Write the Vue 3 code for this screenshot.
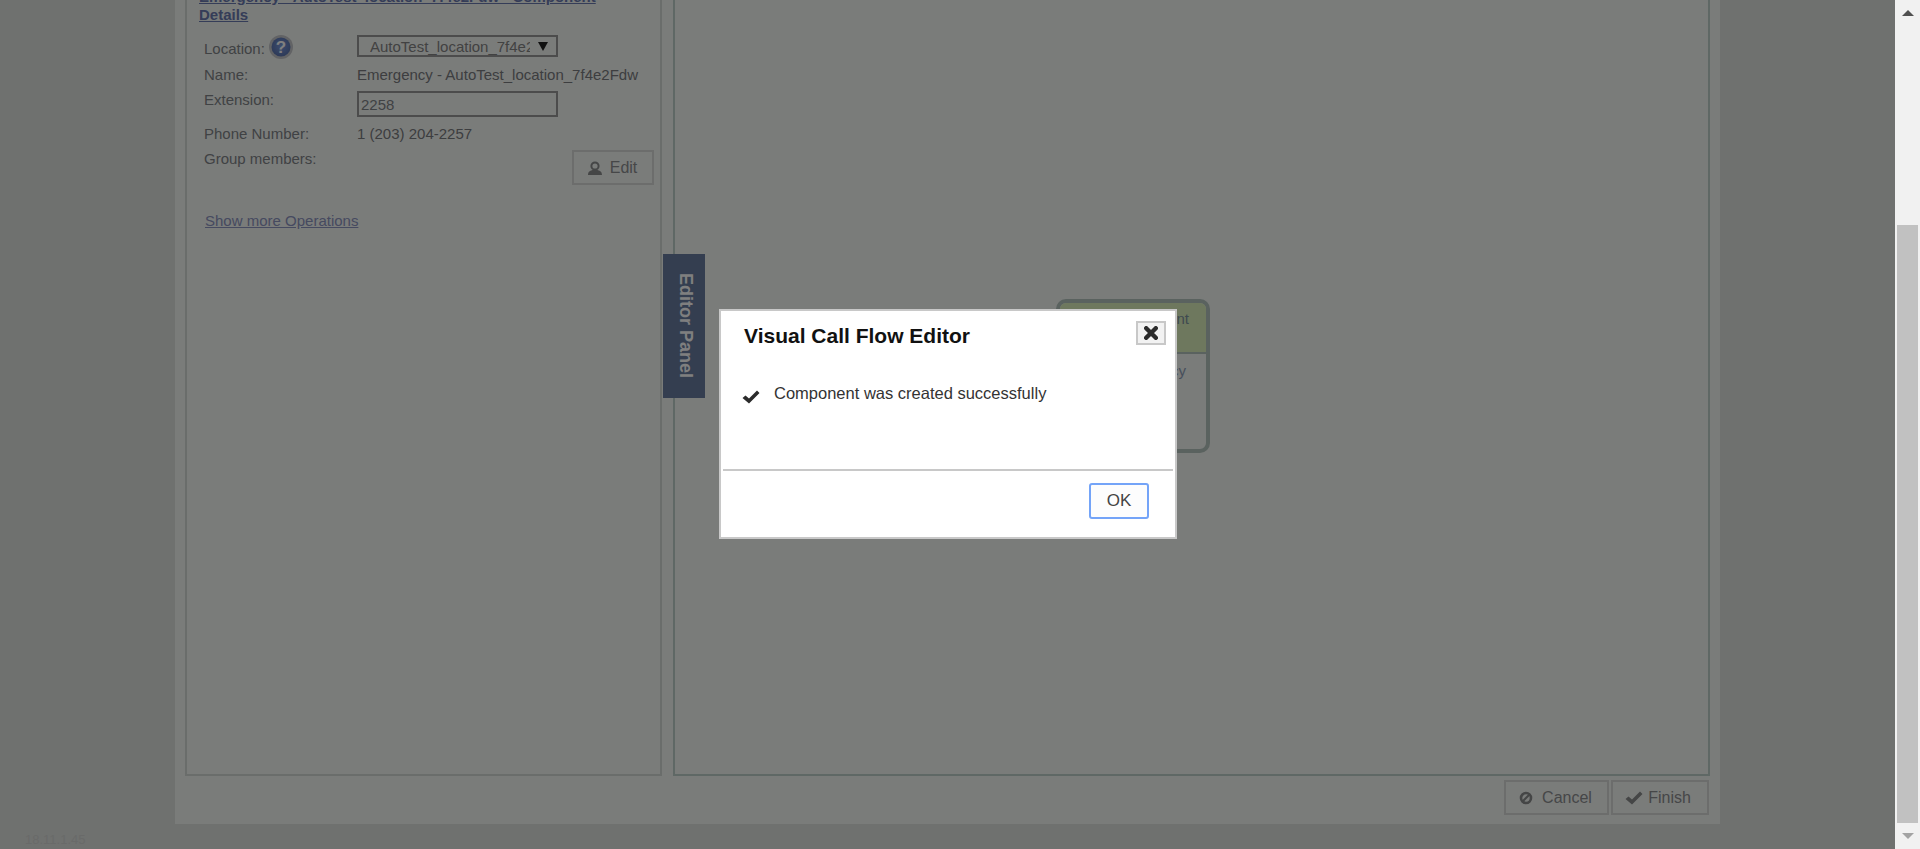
<script setup>
const rows = [
  { label: 'Name:', value: 'Emergency - AutoTest_location_7f4e2Fdw' },
]
</script>

<template>
  <div class="page">
    <div class="main">
      <div class="container">
        <div class="workspace">
          <section class="left-panel">
            <a class="heading">Emergency - AutoTest_location_7f4e2Fdw - Component Details</a>
            <div class="form">
              <div class="label location-label">
                <span class="location-text">Location:</span>
                <svg class="help" viewBox="0 0 24 24" width="24" height="24">
                  <defs>
                    <radialGradient id="helpFill" cx="50%" cy="45%" r="55%">
                      <stop offset="0%" stop-color="#7898dc" />
                      <stop offset="100%" stop-color="#5a74b0" />
                    </radialGradient>
                  </defs>
                  <circle cx="12" cy="12" r="12" fill="#c4c6ca" />
                  <circle cx="12" cy="12" r="9.5" fill="url(#helpFill)" />
                  <text x="12" y="18" text-anchor="middle" class="help-mark">?</text>
                </svg>
              </div>
              <div class="select">
                <span class="select-text">AutoTest_location_7f4e2Fdw</span>
                <span class="select-arrow"></span>
              </div>
              <template v-for="row in rows" :key="row.label">
                <div class="label">{{ row.label }}</div>
                <div class="value">{{ row.value }}</div>
              </template>
              <div class="label">Extension:</div>
              <input class="ext-input" value="2258" />
              <div class="label">Phone Number:</div>
              <div class="value">1 (203) 204-2257</div>
              <div class="label">Group members:</div>
              <div class="group-action">
                <button class="btn edit-btn">
                  <svg viewBox="0 0 16 16" width="16" height="16">
                    <circle cx="8" cy="6" r="3.6" fill="none" stroke="#8a8c8c" stroke-width="2" />
                    <path d="M1 15 C1 11 4 10.5 5.5 10 L10.5 10 C12 10.5 15 11 15 15 Z" fill="#8a8c8c" />
                  </svg>
                  Edit
                </button>
              </div>
            </div>
            <a class="more-link">Show more Operations</a>
          </section>
          <section class="canvas">
            <div class="tab">Editor Panel</div>
            <div class="node">
              <div class="node-head">Component</div>
              <div class="node-body">Emergency</div>
            </div>
          </section>
        </div>
        <div class="actions">
          <button class="btn action-btn cancel-btn">
            <svg viewBox="0 0 14 14" width="14" height="14">
              <circle cx="7" cy="7" r="5" fill="none" stroke="#8a8c8c" stroke-width="2.6" />
              <path d="M3.5 10.5 L10.5 3.5" stroke="#8a8c8c" stroke-width="2.2" />
            </svg>
            Cancel
          </button>
          <button class="btn action-btn finish-btn">
            <svg viewBox="0 0 18 14" width="18" height="14">
              <path d="M0.5 8 L3.5 5.5 L7 8.5 L15 0.5 L17.5 3 L7 13.5 Z" fill="#8a8c8c" />
            </svg>
            Finish
          </button>
        </div>
      </div>
      <div class="version">18.11.1.45</div>
      <div class="overlay"></div>
      <div class="dialog">
        <div class="dialog-head">
          <h2 class="dialog-title">Visual Call Flow Editor</h2>
          <button class="close-btn">
            <svg viewBox="0 0 14 14" width="14" height="14">
              <path d="M2.2 2.2 L11.8 11.8 M11.8 2.2 L2.2 11.8" stroke="#2b2b2b" stroke-width="4.4" stroke-linecap="round" />
            </svg>
          </button>
        </div>
        <div class="dialog-body">
          <svg class="dialog-check" viewBox="0 0 18 14" width="18" height="14">
            <path d="M0.5 8 L3.5 5.5 L7 8.5 L15 0.5 L17.5 3 L7 13.5 Z" fill="#2b2b2b" />
          </svg>
          <p class="dialog-message">Component was created successfully</p>
        </div>
        <div class="dialog-foot">
          <button class="ok-btn">OK</button>
        </div>
      </div>
    </div>
    <div class="scrollbar">
      <div class="arrow-up"></div>
      <div class="track">
        <div class="thumb"></div>
      </div>
      <div class="arrow-down"></div>
    </div>
  </div>
</template>

<style>
html,
body {
  margin: 0;
  overflow: hidden;
}
</style>

<style scoped>
.page {
  display: flex;
  height: 849px;
  font-family: "Liberation Sans", Arial, sans-serif;
  overflow: hidden;
}

.main {
  flex: 1;
  position: relative;
  background: #dfe2df;
  overflow: hidden;
}

.container {
  width: 1545px;
  height: 824px;
  margin-left: 175px;
  background: #f5f8f5;
  padding: 0 10px;
  box-sizing: border-box;
}

.workspace {
  display: flex;
  gap: 11px;
  height: 776px;
}

.left-panel {
  width: 477px;
  box-sizing: border-box;
  border: 2px solid #d4dad6;
  border-top: 0;
  padding: 0 0 0 12px;
}

.heading {
  display: block;
  width: 440px;
  margin-top: -12px;
  font-size: 15px;
  line-height: 18px;
  font-weight: bold;
  text-decoration: underline;
  color: #6a7ab0;
}

.form {
  display: grid;
  grid-template-columns: 153px 297px;
  grid-template-rows: 31px 25px 34px 25px 35px;
  margin-top: 11px;
  padding-left: 5px;
  font-size: 15px;
  color: #808488;
}

.label {
  line-height: 17px;
}

.location-label {
  display: flex;
  align-items: center;
  gap: 4px;
  height: 24px;
}

.location-text {
  padding-top: 2px;
}

.help-mark {
  font: bold 17px "Liberation Sans", Arial, sans-serif;
  fill: #fff;
}

.select {
  display: flex;
  align-items: center;
  width: 201px;
  height: 22px;
  box-sizing: border-box;
  border: 2px solid #999;
  padding: 0 7px 0 11px;
  color: #848484;
}

.select-text {
  width: 160px;
  overflow: hidden;
  white-space: nowrap;
}

.select-arrow {
  margin-left: 8px;
  border-left: 5px solid transparent;
  border-right: 5px solid transparent;
  border-top: 9px solid #222;
}

.value {
  line-height: 17px;
  color: #7a7c80;
}

.ext-input {
  width: 201px;
  height: 26px;
  box-sizing: border-box;
  border: 2px solid #999;
  padding: 0 2px;
  margin: 0;
  font: 15px "Liberation Sans", Arial, sans-serif;
  color: #808488;
  background: #f5f8f5;
  outline: 0;
}

.group-action {
  display: flex;
  justify-content: flex-end;
}

.btn {
  display: inline-flex;
  align-items: center;
  gap: 6px;
  box-sizing: border-box;
  background: #f5f8f5;
  border: 2px solid #d8dbd8;
  font-family: "Liberation Sans", Arial, sans-serif;
  font-size: 16px;
  color: #8c8e90;
  padding: 0;
}

.edit-btn {
  justify-content: center;
  width: 82px;
  height: 35px;
  gap: 7px;
  padding-right: 2px;
}

.more-link {
  display: block;
  margin: 27px 0 0 6px;
  font-size: 15px;
  line-height: 17px;
  text-decoration: underline;
  color: #8c94c0;
}

.canvas {
  position: relative;
  width: 1037px;
  box-sizing: border-box;
  border: 2px solid #bed0ca;
  border-top: 0;
}

.tab {
  position: absolute;
  left: -12px;
  top: 254px;
  width: 42px;
  height: 144px;
  box-sizing: border-box;
  padding-left: 2px;
  background: #687ca0;
  color: #fff;
  font-size: 18px;
  font-weight: bold;
  writing-mode: vertical-rl;
  display: flex;
  align-items: center;
  justify-content: center;
}

.node {
  position: absolute;
  left: 381px;
  top: 299px;
  width: 154px;
  height: 154px;
  box-sizing: border-box;
  border: 4px solid #b4c4be;
  border-radius: 10px;
  overflow: hidden;
  font-size: 15px;
  background: #f5f8f5;
}

.node-head {
  height: 51px;
  background: #dcf0bc;
  border-bottom: 2px solid #b4c4be;
  box-sizing: border-box;
  padding: 7px 17px 0 0;
  text-align: right;
  white-space: nowrap;
  color: #7e94a0;
}

.node-body {
  padding: 8px 20px 0 0;
  text-align: right;
  white-space: nowrap;
  color: #8f9fb8;
}

.actions {
  display: flex;
  justify-content: flex-end;
  gap: 2px;
  margin-top: 4px;
  padding-right: 1px;
}

.action-btn {
  justify-content: center;
  height: 35px;
}

.cancel-btn {
  width: 105px;
  gap: 9px;
  padding-right: 2px;
}

.finish-btn {
  width: 98px;
  gap: 5px;
  padding-right: 4px;
}

.version {
  position: absolute;
  left: 25px;
  bottom: 2px;
  font-size: 13px;
  color: #d2d5d2;
}

.overlay {
  position: absolute;
  inset: 0;
  background: rgba(0, 0, 0, 0.5);
}

.dialog {
  position: absolute;
  left: 719px;
  top: 309px;
  width: 458px;
  height: 230px;
  box-sizing: border-box;
  border: 2px solid #c8c8c8;
  background: #fff;
  display: flex;
  flex-direction: column;
  color: #222;
}

.dialog-head {
  display: flex;
  justify-content: space-between;
  padding: 10px 9px 0 23px;
}

.dialog-title {
  margin: 3px 0 0;
  font-size: 21px;
  line-height: 24px;
  font-weight: bold;
  color: #111;
}

.close-btn {
  display: flex;
  align-items: center;
  justify-content: center;
  width: 30px;
  height: 24px;
  box-sizing: border-box;
  padding: 0;
  border: 2px solid #c8c8c8;
  background: #f2f2f2;
}

.dialog-body {
  display: flex;
  flex: 1;
  align-items: flex-start;
  padding: 35px 0 0 21px;
  gap: 14px;
}

.dialog-check {
  margin-top: 7px;
}

.dialog-message {
  margin: 0;
  font-size: 16.5px;
  line-height: 20px;
  color: #333;
}

.dialog-foot {
  display: flex;
  justify-content: flex-end;
  height: 68px;
  margin: 0 2px;
  padding: 12px 24px 0 0;
  box-sizing: border-box;
  border-top: 2px solid #c8c8c8;
}

.ok-btn {
  width: 60px;
  height: 36px;
  box-sizing: border-box;
  border: 2px solid #74a4f8;
  border-radius: 3px;
  background: #fdfdfd;
  font: 17px "Liberation Sans", Arial, sans-serif;
  color: #444;
  padding: 0;
}

.scrollbar {
  width: 25px;
  height: 849px;
  background: #f1f1f1;
  display: flex;
  flex-direction: column;
  align-items: center;
}

.arrow-up {
  margin-top: 10px;
  border-left: 6px solid transparent;
  border-right: 6px solid transparent;
  border-bottom: 6px solid #505050;
}

.track {
  flex: 1;
  width: 21px;
  padding-top: 209px;
  box-sizing: border-box;
}

.thumb {
  height: 598px;
  background: #c1c1c1;
}

.arrow-down {
  margin: 10px 0 10px;
  border-left: 6px solid transparent;
  border-right: 6px solid transparent;
  border-top: 6px solid #a3a3a3;
}
</style>
